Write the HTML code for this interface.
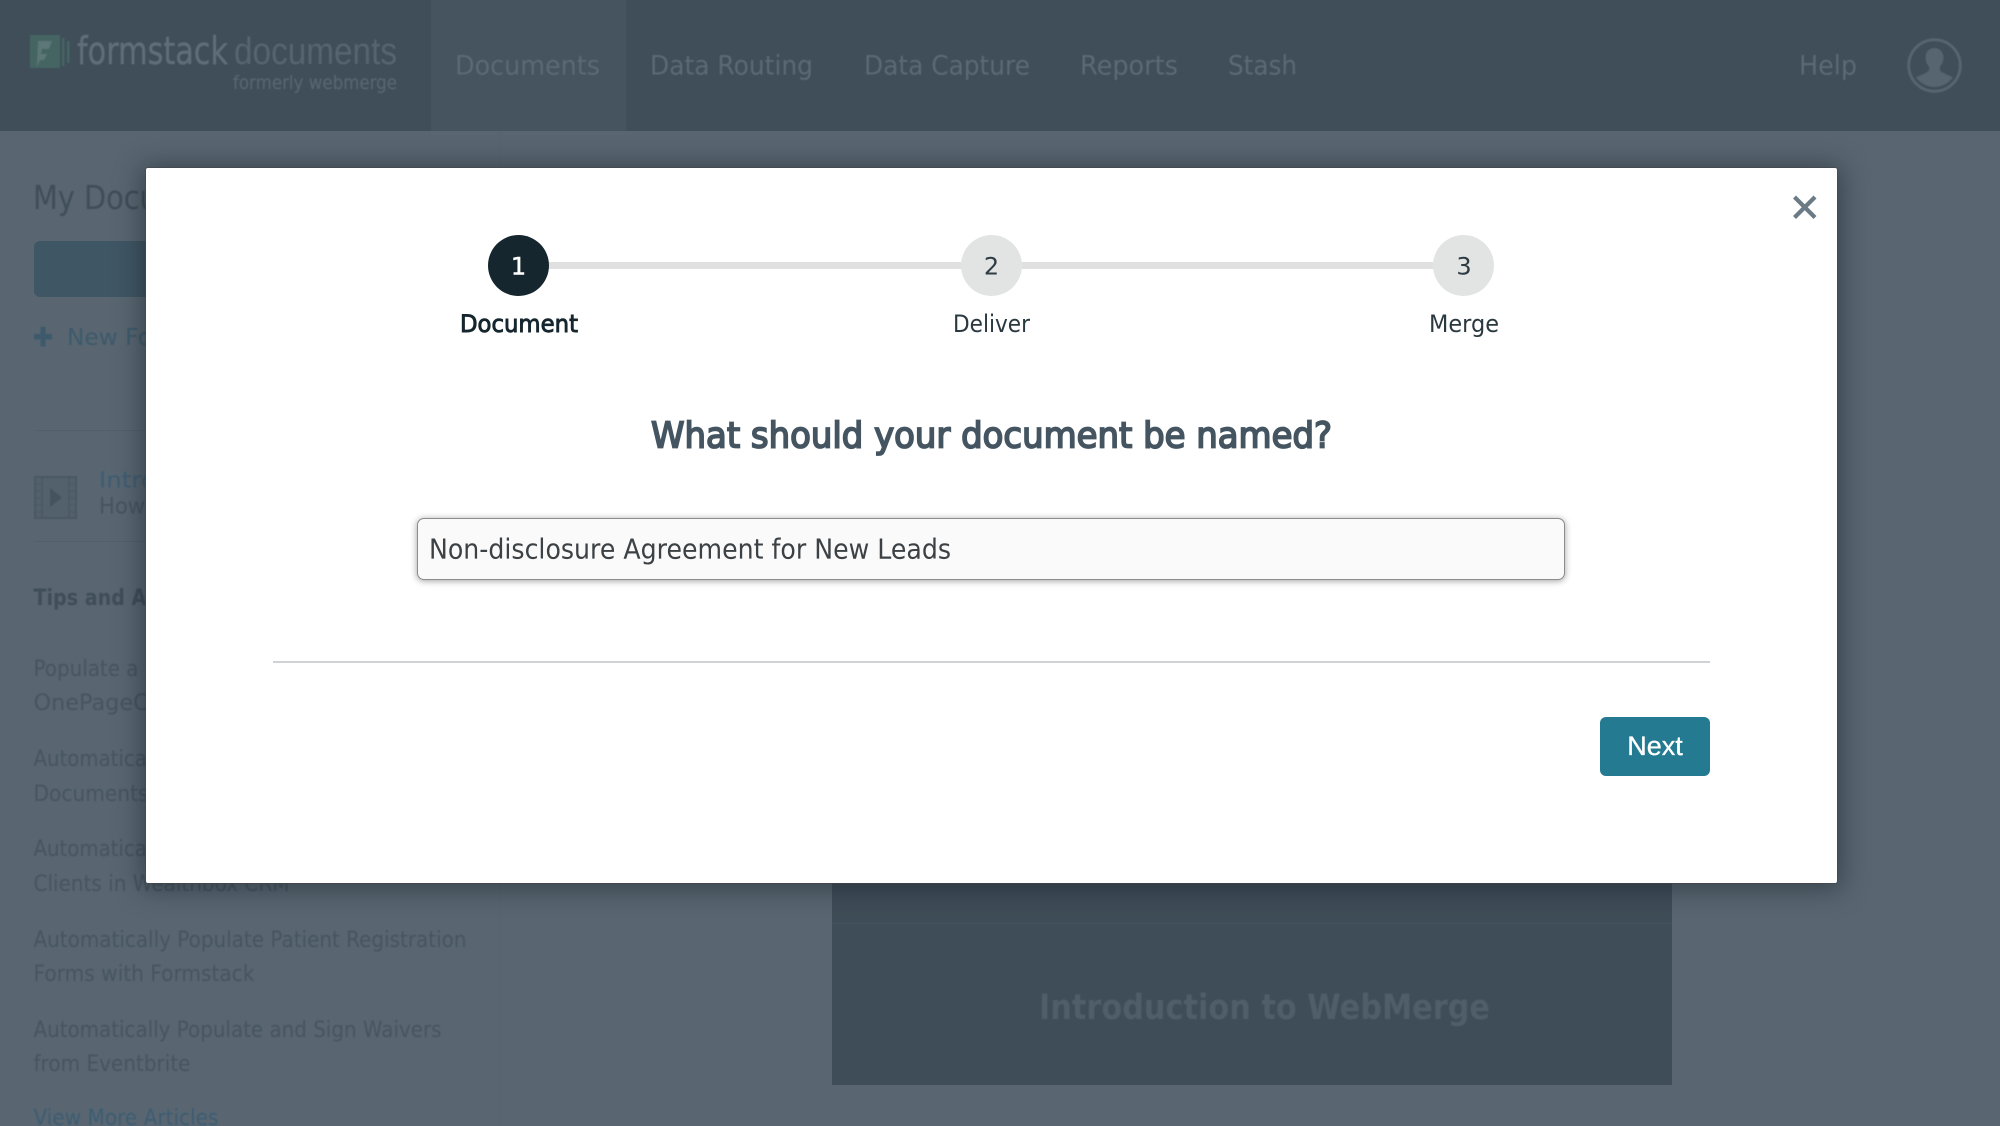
<!DOCTYPE html>
<html lang="en">
<head>
<meta charset="utf-8">
<title>Formstack Documents</title>
<style>
html,body{margin:0;padding:0;width:2000px;height:1126px;overflow:hidden;background:#596671}
body{position:relative;font-family:"DejaVu Sans","Liberation Sans",sans-serif}
.abs{position:absolute}
svg{position:absolute;left:0;top:0;overflow:visible}
svg text{font-family:"DejaVu Sans","Liberation Sans",sans-serif;white-space:pre}
#bg{filter:blur(.45px)}
#header{left:0;top:0;width:2000px;height:131px;background:#3f4e59}
#active{left:431px;top:0;width:195px;height:131px;background:#45545e}
#cta{left:34px;top:241px;width:200px;height:56px;background:#3f5664;border-radius:6px}
#hr1{left:34px;top:430px;width:460px;height:1px;background:#536069}
#hr2{left:34px;top:541px;width:460px;height:1px;background:#536069}
#side{left:499px;top:131px;width:1px;height:995px;background:#56636e}
#video{left:832px;top:800px;width:840px;height:285px;background:#3f4d58}
#modal{left:146px;top:168px;width:1691px;height:715px;background:#fff;border-radius:2px;box-shadow:0 0 0 1px rgba(70,70,70,.6),0 2px 26px 4px rgba(20,30,38,.5)}
#bar{left:372px;top:94px;width:946px;height:7px;background:#dfe0df}
.dot{width:61px;height:61px;border-radius:50%;top:67px;background:#e2e4e3}
#input{left:271px;top:350px;width:1146px;height:60px;border:1.5px solid #8a8c8e;border-radius:7px;background:#fafafa;box-shadow:0 1px 7px rgba(0,0,0,.38)}
#rule{left:127px;top:493px;width:1437px;height:2px;background:#d0d3d6}
#next{left:1454px;top:549px;width:110px;height:59px;background:#237a91;border-radius:6px;color:#fff;font:27px/59px "Liberation Sans",sans-serif;text-align:center;-webkit-text-stroke:.3px #fff}
</style>
</head>
<body>
<div class="abs" id="header"></div>
<div class="abs" id="active"></div>
<div class="abs" id="side"></div>
<div class="abs" id="cta"></div>
<div class="abs" id="hr1"></div>
<div class="abs" id="hr2"></div>
<div class="abs" id="video"></div>

<svg id="bg" width="2000" height="1126" viewBox="0 0 2000 1126">
  <!-- logo -->
  <rect x="30" y="35" width="30" height="33" fill="#456563"/>
  <path d="M38 41h14l-3 8h-7l-1 5h6l-3 6h-4l-3 6z" fill="#5d7677"/>
  <rect x="62" y="38" width="2.5" height="28" fill="#456563"/>
  <rect x="67" y="41" width="2.5" height="22" fill="#456563"/>
  <text x="77" y="64" font-size="38" fill="#5f6e79" stroke="#5f6e79" stroke-width=".4" textLength="151" lengthAdjust="spacingAndGlyphs">formstack</text>
  <text x="234" y="64" font-size="38" fill="#56656f" textLength="163" lengthAdjust="spacingAndGlyphs" style="font-family:'Liberation Sans',sans-serif">documents</text>
  <text x="233" y="89" font-size="19" fill="#56656f" stroke="#56656f" stroke-width=".3" textLength="164" lengthAdjust="spacingAndGlyphs">formerly webmerge</text>
  <!-- nav -->
  <g font-size="27" fill="#5b6a75">
    <text x="455" y="74.500" textLength="145" lengthAdjust="spacingAndGlyphs">Documents</text>
    <text x="650" y="74.500" textLength="163" lengthAdjust="spacingAndGlyphs">Data Routing</text>
    <text x="864" y="74.500" textLength="166" lengthAdjust="spacingAndGlyphs">Data Capture</text>
    <text x="1080" y="74.500" textLength="98" lengthAdjust="spacingAndGlyphs">Reports</text>
    <text x="1228" y="74.500" textLength="69" lengthAdjust="spacingAndGlyphs">Stash</text>
    <text x="1799" y="74.500" textLength="58" lengthAdjust="spacingAndGlyphs">Help</text>
  </g>
  <!-- avatar -->
  <circle cx="1934.5" cy="65.5" r="25.8" fill="none" stroke="#566570" stroke-width="3"/>
  <path d="M1934.5 48c5.500 0 9 4.200 9 9.500 0 3.500-1.300 6.500-3 8.500-.8 1-.8 3.500 0 5 1 1.500 9.500 4.500 12.500 6.500-4.500 6-11 9.500-18.500 9.500s-14-3.500-18.500-9.500c3-2 11.500-5 12.500-6.500.8-1.500.8-4 0-5-1.700-2-3-5-3-8.500 0-5.300 3.500-9.500 9-9.500z" fill="#566570"/>
  <!-- sidebar -->
  <text x="33" y="209" font-size="33" fill="#3f4e59" textLength="215" lengthAdjust="spacingAndGlyphs">My Documents</text>
  <path d="M34 334h6.500v-7h5v7h6.500v5.500h-6.500v7h-5v-7H34z" fill="#3d5a6c"/>
  <text x="67" y="345" font-size="23" fill="#3d5a6c" textLength="130" lengthAdjust="spacingAndGlyphs">New Folder</text>
  <rect x="35" y="477" width="41" height="41" fill="#53616c" stroke="#4a5863" stroke-width="2"/>
  <path d="M42 477v41M69 477v41" stroke="#4a5863" stroke-width="1.500"/>
  <path d="M35 484h7M35 491h7M35 498h7M35 505h7M35 512h7M69 484h7M69 491h7M69 498h7M69 505h7M69 512h7" stroke="#4a5863" stroke-width="1"/>
  <path d="M50 488l12 9.500-12 9.500z" fill="#45535e"/>
  <text x="99" y="487.500" font-size="22.500" fill="#3d5d73" textLength="57" lengthAdjust="spacingAndGlyphs">Intro</text>
  <text x="99" y="513.500" font-size="22.500" fill="#465560" textLength="46" lengthAdjust="spacingAndGlyphs">How</text>
  <text x="33.500" y="605" font-size="22" font-weight="700" fill="#3f4e59" textLength="180" lengthAdjust="spacingAndGlyphs">Tips and Articles</text>
  <g font-size="22.500" fill="#465560">
    <text x="33.500" y="676" textLength="105" lengthAdjust="spacingAndGlyphs">Populate a</text>
    <text x="33.500" y="710" textLength="150" lengthAdjust="spacingAndGlyphs">OnePageCRM</text>
    <text x="33.500" y="766" textLength="136" lengthAdjust="spacingAndGlyphs">Automatically</text>
    <text x="33.500" y="801" textLength="115" lengthAdjust="spacingAndGlyphs">Documents</text>
    <text x="33.500" y="856" textLength="136" lengthAdjust="spacingAndGlyphs">Automatically</text>
    <text x="33.500" y="891" textLength="256" lengthAdjust="spacingAndGlyphs">Clients in Wealthbox CRM</text>
    <text x="33.500" y="947" textLength="433" lengthAdjust="spacingAndGlyphs">Automatically Populate Patient Registration</text>
    <text x="33.500" y="981" textLength="221" lengthAdjust="spacingAndGlyphs">Forms with Formstack</text>
    <text x="33.500" y="1037" textLength="408" lengthAdjust="spacingAndGlyphs">Automatically Populate and Sign Waivers</text>
    <text x="33.500" y="1071" textLength="157" lengthAdjust="spacingAndGlyphs">from Eventbrite</text>
  </g>
  <text x="33.500" y="1125" font-size="22.500" fill="#3d5d73" textLength="185" lengthAdjust="spacingAndGlyphs">View More Articles</text>
  <!-- video -->
  <rect x="832" y="923" width="840" height="1" fill="#48565f"/>
  <text x="1039" y="1019" font-size="35" font-weight="700" fill="#4f5e69" textLength="451" lengthAdjust="spacingAndGlyphs">Introduction to WebMerge</text>
</svg>

<div class="abs" id="modal">
  <div class="abs" id="bar"></div>
  <div class="abs dot" style="left:342px;background:#16262e"></div>
  <div class="abs dot" style="left:815px"></div>
  <div class="abs dot" style="left:1287px"></div>
  <div class="abs" id="input"></div>
  <div class="abs" id="rule"></div>
  <div class="abs" id="next">Next</div>
  <svg width="1691" height="715" viewBox="146 168 1691 715">
    <path d="M1794.500 197l20.500 20.500M1815 197l-20.500 20.500" stroke="#6a7b85" stroke-width="4.200" fill="none"/>
    <text x="518.500" y="274.500" font-size="24" fill="#fff" text-anchor="middle" stroke="#fff" stroke-width=".5">1</text>
    <text x="991.500" y="274.500" font-size="24" fill="#2f3b43" text-anchor="middle">2</text>
    <text x="1464" y="274.500" font-size="24" fill="#2f3b43" text-anchor="middle">3</text>
    <text x="460" y="332" font-size="24" fill="#16262e" stroke="#16262e" stroke-width=".9" textLength="118" lengthAdjust="spacingAndGlyphs">Document</text>
    <text x="953" y="332" font-size="24" fill="#2a3840" textLength="77" lengthAdjust="spacingAndGlyphs">Deliver</text>
    <text x="1429" y="332" font-size="24" fill="#2a3840" textLength="70" lengthAdjust="spacingAndGlyphs">Merge</text>
    <text x="651" y="447.500" font-size="36" fill="#445561" stroke="#445561" stroke-width="1.800" textLength="681" lengthAdjust="spacingAndGlyphs">What should your document be named?</text>
    <text x="429" y="558.500" font-size="28" fill="#3c4145" textLength="522" lengthAdjust="spacingAndGlyphs">Non-disclosure Agreement for New Leads</text>
  </svg>
</div>
</body>
</html>
